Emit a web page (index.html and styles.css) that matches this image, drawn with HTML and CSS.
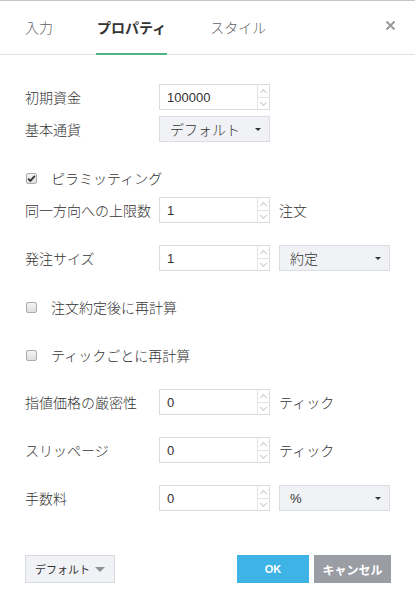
FILE: index.html
```html
<!DOCTYPE html>
<html lang="ja">
<head>
<meta charset="utf-8">
<link rel="stylesheet" href="styles.css">
</head>
<body>
<div class="dialog">
  <div class="header">
    <div class="tab">入力</div>
    <div class="tab active">プロパティ</div>
    <div class="tab">スタイル</div>
    <div class="close">
      <svg width="11" height="11" viewBox="0 0 11 11"><path d="M1.5 1.5 L9.5 9.5 M9.5 1.5 L1.5 9.5" stroke="#9a9a9a" stroke-width="2" fill="none"/></svg>
    </div>
  </div>
  <div class="content">
    <div class="row r1">
      <div class="label">初期資金</div>
      <div class="num"><div class="val">100000</div><div class="spin"><span class="up"></span><span class="down"></span></div></div>
    </div>
    <div class="row r2">
      <div class="label">基本通貨</div>
      <div class="select"><span>デフォルト</span><i class="caret"></i></div>
    </div>
    <div class="row r3">
      <span class="check checked"><svg width="9" height="9" viewBox="0 0 9 9"><path d="M1.2 4.6 L3.4 6.9 L7.8 1.8" stroke="#333" stroke-width="1.8" fill="none"/></svg></span>
      <span class="ctext">ピラミッティング</span>
    </div>
    <div class="row r4">
      <div class="label">同一方向への上限数</div>
      <div class="num"><div class="val">1</div><div class="spin"><span class="up"></span><span class="down"></span></div></div>
      <div class="unit">注文</div>
    </div>
    <div class="row r5">
      <div class="label">発注サイズ</div>
      <div class="num"><div class="val">1</div><div class="spin"><span class="up"></span><span class="down"></span></div></div>
      <div class="select side"><span>約定</span><i class="caret"></i></div>
    </div>
    <div class="row r6">
      <span class="check"></span>
      <span class="ctext">注文約定後に再計算</span>
    </div>
    <div class="row r7">
      <span class="check"></span>
      <span class="ctext">ティックごとに再計算</span>
    </div>
    <div class="row r8">
      <div class="label">指値価格の厳密性</div>
      <div class="num"><div class="val">0</div><div class="spin"><span class="up"></span><span class="down"></span></div></div>
      <div class="unit">ティック</div>
    </div>
    <div class="row r9">
      <div class="label">スリッページ</div>
      <div class="num"><div class="val">0</div><div class="spin"><span class="up"></span><span class="down"></span></div></div>
      <div class="unit">ティック</div>
    </div>
    <div class="row r10">
      <div class="label">手数料</div>
      <div class="num"><div class="val">0</div><div class="spin"><span class="up"></span><span class="down"></span></div></div>
      <div class="select side"><span class="pct">%</span><i class="caret"></i></div>
    </div>
    <div class="footer">
      <div class="defbtn"><span>デフォルト</span><i class="caret gray"></i></div>
      <div class="spacer"></div>
      <div class="btn ok">OK</div>
      <div class="btn cancel">キャンセル</div>
    </div>
  </div>
</div>
</body>
</html>
```

FILE: styles.css
```css
html, body {
  margin: 0;
  padding: 0;
  background: #ffffff;
}
body {
  font-family: "Noto Sans CJK JP", "Liberation Sans", sans-serif;
  font-weight: 300;
  color: #333333;
  font-size: 14px;
}
.dialog {
  width: 415px;
  height: 607px;
  border-top: 1px solid #c3c6cc;
  box-sizing: border-box;
}
.header {
  height: 53px;
  border-bottom: 1px solid #e2e2e2;
  display: flex;
  align-items: flex-start;
  padding-left: 25px;
  gap: 44px;
  position: relative;
}
.tab {
  height: 52px;
  box-sizing: content-box;
  border-bottom: 2px solid transparent;
  display: flex;
  align-items: center;
  padding-top: 2px;
  margin-top: -2px;
  font-size: 14px;
  color: #5f6369;
  line-height: 1;
}
.tab.active {
  border-bottom-color: #50b489;
  color: #333333;
  font-weight: bold;
  padding-left: 1px;
  padding-right: 1px;
  margin-left: -1px;
  margin-right: -1px;
}
.close {
  position: absolute;
  right: 19px;
  top: 19px;
  width: 11px;
  height: 11px;
  display: flex;
}
.content {
  padding: 0 24px 0 25px;
}
.row {
  display: flex;
  align-items: center;
  height: 26px;
  margin-top: 22px;
}
.r1 { margin-top: 29px; }
.r2 { margin-top: 6px; }
.r3 { margin-top: 23px; }
.r4 { margin-top: 6px; }
.r6 { margin-top: 23px; }
.r8 { margin-top: 21px; }
.label {
  width: 134px;
  flex: none;
  font-size: 14px;
  color: #333;
  line-height: 1;
}
.num {
  width: 111px;
  height: 26px;
  box-sizing: border-box;
  border: 1px solid #dcdcdc;
  display: flex;
  flex: none;
  background: #fff;
}
.val {
  flex: 1;
  display: flex;
  align-items: center;
  padding-left: 7px;
  font-family: "Liberation Sans", Arial, sans-serif;
  font-weight: normal;
  font-size: 13px;
  color: #333;
}
.spin {
  width: 11px;
  border-left: 1px solid #e3e3e3;
  display: flex;
  flex-direction: column;
}
.spin span {
  flex: 1;
  position: relative;
}
.spin .up {
  border-bottom: 1px solid #e3e3e3;
}
.spin span::after {
  content: "";
  position: absolute;
  left: 3px;
  width: 4px;
  height: 4px;
  border-left: 1px solid #c5c8cc;
  border-top: 1px solid #c5c8cc;
}
.spin .up::after {
  top: 5px;
  transform: rotate(45deg);
}
.spin .down::after {
  top: 2px;
  transform: rotate(225deg);
}
.unit {
  margin-left: 9px;
  font-size: 14px;
  color: #333;
  line-height: 1;
}
.select {
  width: 111px;
  height: 26px;
  box-sizing: border-box;
  border: 1px solid #dcdde2;
  background: #f1f2f6;
  display: flex;
  align-items: center;
  padding-left: 10px;
  padding-right: 8px;
  font-size: 14px;
  color: #333;
  flex: none;
}
.select span {
  flex: 1;
  line-height: 1;
}
.select .pct {
  font-family: "Liberation Sans", Arial, sans-serif;
  font-weight: normal;
  font-size: 13px;
}
.select.side {
  margin-left: 9px;
}
.caret {
  display: block;
  width: 0;
  height: 0;
  border-left: 3px solid transparent;
  border-right: 3px solid transparent;
  border-top: 3.5px solid #333;
}
.caret.gray {
  border-left-width: 5px;
  border-right-width: 5px;
  border-top: 5px solid #8e9096;
}
.check {
  width: 11px;
  height: 11px;
  box-sizing: border-box;
  border: 1px solid #a9abaf;
  border-radius: 2px;
  background: linear-gradient(#f4f4f4, #dedede);
  margin-left: 1px;
  margin-right: 14px;
  display: flex;
  align-items: center;
  justify-content: center;
}
.check svg {
  display: block;
}
.ctext {
  font-size: 14px;
  color: #333;
  line-height: 1;
}
.footer {
  display: flex;
  align-items: center;
  margin-top: 44px;
  height: 28px;
}
.defbtn {
  width: 90px;
  height: 28px;
  box-sizing: border-box;
  border: 1px solid #d8dadf;
  background: #f1f2f6;
  display: flex;
  align-items: center;
  padding-left: 9px;
  padding-right: 9px;
  font-size: 11px;
  font-weight: normal;
  color: #333;
}
.defbtn span {
  flex: 1;
  line-height: 1;
}
.spacer {
  flex: 1;
}
.btn {
  height: 28px;
  display: flex;
  align-items: center;
  justify-content: center;
  color: #fff;
  font-weight: bold;
  font-size: 12px;
}
.ok {
  width: 72px;
  background: #3db4e5;
  font-family: "Liberation Sans", Arial, sans-serif;
  font-size: 11px;
  margin-right: 5px;
}
.cancel {
  width: 77px;
  background: #9b9da4;
}
```
